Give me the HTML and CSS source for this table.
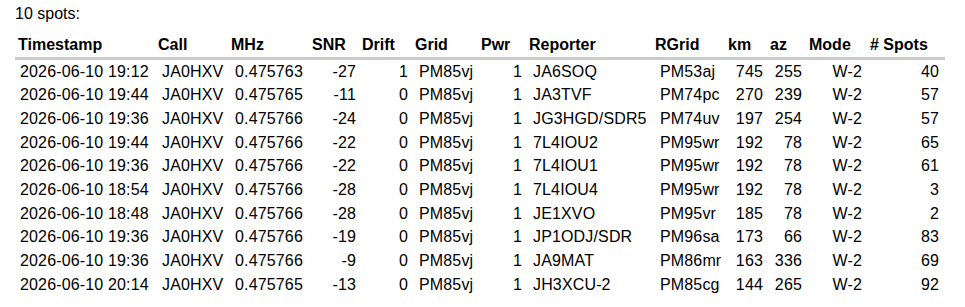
FILE: index.html
```html
<!DOCTYPE html>
<html>
<head>
<meta charset="utf-8">
<title>Spots</title>
<link rel="stylesheet" href="styles.css">
</head>
<body>
<div class="page">
  <p class="count">10 spots:</p>
  <table class="spots">
    <thead>
      <tr>
        <th class="c-ts">Timestamp</th>
        <th class="c-call">Call</th>
        <th class="c-mhz">MHz</th>
        <th class="c-snr">SNR</th>
        <th class="c-drift">Drift</th>
        <th class="c-grid">Grid</th>
        <th class="c-pwr">Pwr</th>
        <th class="c-rep">Reporter</th>
        <th class="c-rgrid">RGrid</th>
        <th class="c-km">km</th>
        <th class="c-az">az</th>
        <th class="c-mode">Mode</th>
        <th class="c-spots"># Spots</th>
      </tr>
    </thead>
    <tbody>
      <tr><td class="c-ts">2026-06-10 19:12</td><td class="c-call">JA0HXV</td><td class="c-mhz">0.475763</td><td class="c-snr">-27</td><td class="c-drift">1</td><td class="c-grid">PM85vj</td><td class="c-pwr">1</td><td class="c-rep">JA6SOQ</td><td class="c-rgrid">PM53aj</td><td class="c-km">745</td><td class="c-az">255</td><td class="c-mode">W-2</td><td class="c-spots">40</td></tr>
      <tr><td class="c-ts">2026-06-10 19:44</td><td class="c-call">JA0HXV</td><td class="c-mhz">0.475765</td><td class="c-snr">-11</td><td class="c-drift">0</td><td class="c-grid">PM85vj</td><td class="c-pwr">1</td><td class="c-rep">JA3TVF</td><td class="c-rgrid">PM74pc</td><td class="c-km">270</td><td class="c-az">239</td><td class="c-mode">W-2</td><td class="c-spots">57</td></tr>
      <tr><td class="c-ts">2026-06-10 19:36</td><td class="c-call">JA0HXV</td><td class="c-mhz">0.475766</td><td class="c-snr">-24</td><td class="c-drift">0</td><td class="c-grid">PM85vj</td><td class="c-pwr">1</td><td class="c-rep">JG3HGD/SDR5</td><td class="c-rgrid">PM74uv</td><td class="c-km">197</td><td class="c-az">254</td><td class="c-mode">W-2</td><td class="c-spots">57</td></tr>
      <tr><td class="c-ts">2026-06-10 19:44</td><td class="c-call">JA0HXV</td><td class="c-mhz">0.475766</td><td class="c-snr">-22</td><td class="c-drift">0</td><td class="c-grid">PM85vj</td><td class="c-pwr">1</td><td class="c-rep">7L4IOU2</td><td class="c-rgrid">PM95wr</td><td class="c-km">192</td><td class="c-az">78</td><td class="c-mode">W-2</td><td class="c-spots">65</td></tr>
      <tr><td class="c-ts">2026-06-10 19:36</td><td class="c-call">JA0HXV</td><td class="c-mhz">0.475766</td><td class="c-snr">-22</td><td class="c-drift">0</td><td class="c-grid">PM85vj</td><td class="c-pwr">1</td><td class="c-rep">7L4IOU1</td><td class="c-rgrid">PM95wr</td><td class="c-km">192</td><td class="c-az">78</td><td class="c-mode">W-2</td><td class="c-spots">61</td></tr>
      <tr><td class="c-ts">2026-06-10 18:54</td><td class="c-call">JA0HXV</td><td class="c-mhz">0.475766</td><td class="c-snr">-28</td><td class="c-drift">0</td><td class="c-grid">PM85vj</td><td class="c-pwr">1</td><td class="c-rep">7L4IOU4</td><td class="c-rgrid">PM95wr</td><td class="c-km">192</td><td class="c-az">78</td><td class="c-mode">W-2</td><td class="c-spots">3</td></tr>
      <tr><td class="c-ts">2026-06-10 18:48</td><td class="c-call">JA0HXV</td><td class="c-mhz">0.475766</td><td class="c-snr">-28</td><td class="c-drift">0</td><td class="c-grid">PM85vj</td><td class="c-pwr">1</td><td class="c-rep">JE1XVO</td><td class="c-rgrid">PM95vr</td><td class="c-km">185</td><td class="c-az">78</td><td class="c-mode">W-2</td><td class="c-spots">2</td></tr>
      <tr><td class="c-ts">2026-06-10 19:36</td><td class="c-call">JA0HXV</td><td class="c-mhz">0.475766</td><td class="c-snr">-19</td><td class="c-drift">0</td><td class="c-grid">PM85vj</td><td class="c-pwr">1</td><td class="c-rep">JP1ODJ/SDR</td><td class="c-rgrid">PM96sa</td><td class="c-km">173</td><td class="c-az">66</td><td class="c-mode">W-2</td><td class="c-spots">83</td></tr>
      <tr><td class="c-ts">2026-06-10 19:36</td><td class="c-call">JA0HXV</td><td class="c-mhz">0.475766</td><td class="c-snr">-9</td><td class="c-drift">0</td><td class="c-grid">PM85vj</td><td class="c-pwr">1</td><td class="c-rep">JA9MAT</td><td class="c-rgrid">PM86mr</td><td class="c-km">163</td><td class="c-az">336</td><td class="c-mode">W-2</td><td class="c-spots">69</td></tr>
      <tr><td class="c-ts">2026-06-10 20:14</td><td class="c-call">JA0HXV</td><td class="c-mhz">0.475765</td><td class="c-snr">-13</td><td class="c-drift">0</td><td class="c-grid">PM85vj</td><td class="c-pwr">1</td><td class="c-rep">JH3XCU-2</td><td class="c-rgrid">PM85cg</td><td class="c-km">144</td><td class="c-az">265</td><td class="c-mode">W-2</td><td class="c-spots">92</td></tr>
    </tbody>
  </table>
</div>
</body>
</html>
```

FILE: styles.css
```css
html, body {
  margin: 0;
  padding: 0;
  background: #fff;
}

.page {
  padding: 5px 0 0 15px;
  font-family: "Liberation Sans", Arial, sans-serif;
  font-size: 16px;
  color: #000;
}

.count {
  margin: 0;
  line-height: 18px;
}

.spots {
  margin-top: 10px;
  border-collapse: collapse;
  table-layout: fixed;
  width: 930px;
  white-space: nowrap;
}

.spots th {
  font-weight: bold;
  text-align: left;
  line-height: 18px;
  padding: 3px 0 3px 3px;
  border-bottom: 3px solid #cbcbcb;
}

.spots td {
  line-height: 19.7px;
  padding: 1.5px 0 2.5px 0;
  letter-spacing: 0.15px;
}

/* column widths */
.spots th.c-ts { width: 137px; }
.spots th.c-call { width: 70px; }
.spots th.c-mhz { width: 78px; }
.spots th.c-snr { width: 47px; }
.spots th.c-drift { width: 50px; }
.spots th.c-grid { width: 63px; }
.spots th.c-pwr { width: 45px; }
.spots th.c-rep { width: 123px; }
.spots th.c-rgrid { width: 70px; }
.spots th.c-km { width: 39px; }
.spots th.c-az { width: 36px; }
.spots th.c-mode { width: 58px; }
.spots th.c-spots { width: 75px; }

/* data alignment */
.spots td.c-ts { padding-left: 5px; }
.spots td.c-call { padding-left: 7px; }
.spots td.c-mhz { padding-left: 7px; }
.spots td.c-snr { text-align: right; padding-right: 3px; }
.spots td.c-drift { text-align: right; padding-right: 4px; }
.spots td.c-grid { padding-left: 7px; }
.spots td.c-pwr { text-align: right; padding-right: 4px; }
.spots td.c-rep { padding-left: 7px; }
.spots td.c-rgrid { padding-left: 8px; }
.spots td.c-km { text-align: right; padding-right: 4px; }
.spots td.c-az { text-align: right; padding-right: 4px; }
.spots td.c-mode { text-align: right; padding-right: 5px; }
.spots td.c-spots { text-align: right; padding-right: 6px; }
```
